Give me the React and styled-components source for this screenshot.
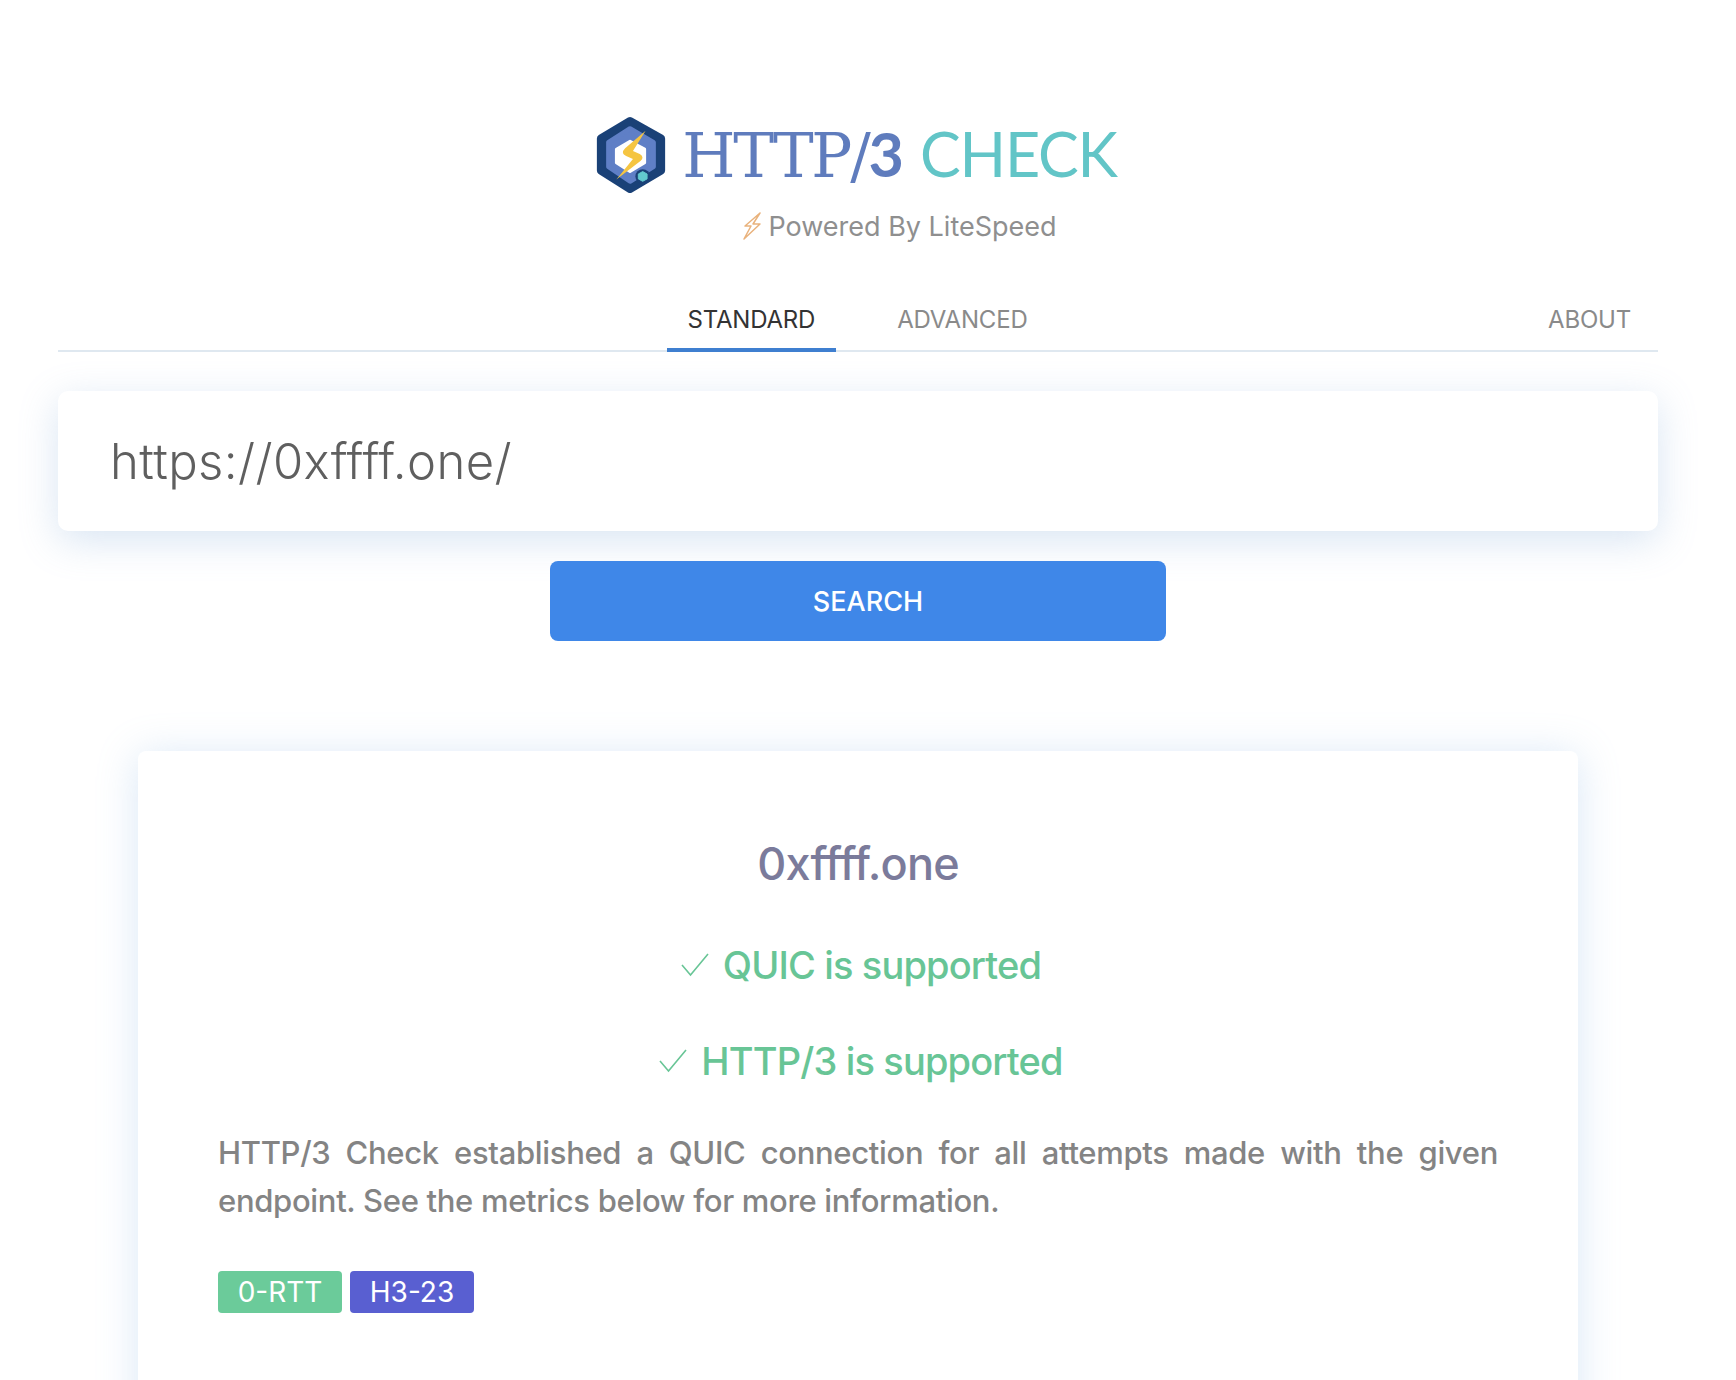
import * as React from 'react';
import styled, { createGlobalStyle } from 'styled-components';

const GlobalStyle = createGlobalStyle`
    html, body {
        margin: 0;
        padding: 0;
        background: #fff;
        font-family: Inter, "Liberation Sans", sans-serif;
    }
`;

const Page = styled.div`
    height: 1380px;
    overflow: hidden;
    padding: 116px 78px 0 58px;
    box-sizing: border-box;
`;

const Brand = styled.div`
    display: flex;
    align-items: center;
    justify-content: center;
    gap: 15px;
    height: 78px;
    padding-right: 4px;
`;

const BrandSlab = styled.span`
    font-family: "DejaVu Serif", serif;
    font-size: 61px;
    line-height: 78px;
    letter-spacing: -2.2px;
    color: #5f7cbd;
`;

const BrandDigit = styled.span`
    font-family: Lato, sans-serif;
    font-weight: 700;
    letter-spacing: 0;
`;

const BrandCheck = styled.span`
    font-family: Lato, sans-serif;
    font-size: 61px;
    line-height: 78px;
    letter-spacing: -1.2px;
    color: #62c5c7;
`;

const BrandWords = styled.div`
    display: flex;
    gap: 16px;
`;

const Powered = styled.div`
    display: flex;
    align-items: center;
    justify-content: center;
    gap: 5px;
    height: 34px;
    margin-top: 15px;
    padding-left: 82px;
    font-size: 27px;
    letter-spacing: 0;
    color: #8f8f8f;
`;

const TabBar = styled.div`
    display: grid;
    grid-template-columns: 1fr auto 1fr;
    height: 66px;
    margin-top: 41px;
    border-bottom: 2px solid #dfe8f0;
`;

const TabGroup = styled.div`
    grid-column: 2;
    display: flex;
    gap: 41px;
`;

const Tab = styled.div`
    display: flex;
    align-items: center;
    justify-content: center;
    justify-self: ${(props) => props.$end ? 'end' : 'auto'};
    height: 68px;
    padding: 6px ${(props) => props.$end ? '27px' : '21px'} 0 ${(props) => props.$end ? '0' : '20px'};
    box-sizing: border-box;
    font-size: 24px;
    letter-spacing: -0.2px;
    color: ${(props) => props.$active ? '#333' : '#8a8a8a'};
    border-bottom: 4px solid ${(props) => props.$active ? '#3f7fd0' : 'transparent'};
`;

const InputCard = styled.div`
    display: flex;
    align-items: center;
    height: 140px;
    margin-top: 39px;
    padding-left: 52px;
    background: #fff;
    border-radius: 10px;
    box-shadow: 0 10px 38px rgba(130, 170, 215, 0.3);
    font-family: Inter, sans-serif;
    font-weight: 300;
    font-size: 49px;
    letter-spacing: 0.4px;
    color: #5f5f5f;
`;

const SearchRow = styled.div`
    display: flex;
    justify-content: center;
    margin-top: 30px;
`;

const SearchButton = styled.button`
    width: 616px;
    height: 80px;
    padding: 0 0 0 20px;
    border: 0;
    border-radius: 8px;
    background: #3f87e8;
    color: #fff;
    font-family: Inter, sans-serif;
    font-size: 27px;
    font-weight: 450;
    letter-spacing: 0;
`;

const ResultCard = styled.section`
    margin: 110px 80px 0;
    padding: 80px 80px 60px;
    height: 800px;
    box-sizing: border-box;
    background: #fff;
    border-radius: 8px;
    box-shadow: 0 4px 40px rgba(130, 175, 225, 0.3);
`;

const Host = styled.h2`
    margin: 0;
    text-align: center;
    font-size: 45px;
    line-height: 66px;
    font-weight: 450;
    letter-spacing: -0.8px;
    color: #7b7b9b;
`;

const Status = styled.div`
    display: flex;
    align-items: center;
    justify-content: center;
    gap: 14px;
    height: 60px;
    margin-top: ${(props) => props.$first ? '38px' : '36px'};
    padding-left: 6px;
    font-size: 38px;
    font-weight: 450;
    letter-spacing: -0.85px;
    color: #68c596;
`;

const Description = styled.p`
    margin: 38px 0 0;
    text-align: justify;
    font-size: 31px;
    font-weight: 450;
    line-height: 48px;
    letter-spacing: -0.32px;
    color: #848484;
`;

const Badges = styled.div`
    display: flex;
    gap: 8px;
    margin-top: 46px;
`;

const Badge = styled.span`
    display: flex;
    align-items: center;
    justify-content: center;
    width: 124px;
    height: 42px;
    border-radius: 4px;
    background: ${(props) => props.$color};
    color: #fff;
    font-size: 28px;
`;

const BrandLogo = () => (
    <svg width="72" height="78" viewBox="6 5 72 80" aria-hidden="true">
        <path d="M41 10 L73 28 V61 L41 80 L11 61 V28 Z" fill="#1a4177" stroke="#1a4177" strokeWidth="8" strokeLinejoin="round" />
        <path d="M41 18 L65 32 V57 L41 72 L19 57 V32 Z" fill="#5f7fc6" stroke="#5f7fc6" strokeWidth="5" strokeLinejoin="round" />
        <path d="M41 31 L56 39 V53 L41 62 L27 53 V39 Z" fill="#fff" stroke="#fff" strokeWidth="3" strokeLinejoin="round" />
        <path d="M57 20 L36 38 Q31 43 37 46 L44 49 L27 70 L52 51 Q56 47 51 44 L44 41 Z" fill="#f5c542" />
        <circle cx="54" cy="67" r="7.5" fill="#1a4177" />
        <path d="M54 62 L58.5 64.5 V69.5 L54 72 L49.5 69.5 V64.5 Z" fill="#62c9cf" stroke="#62c9cf" strokeLinejoin="round" />
    </svg>
);

const BoltIcon = () => (
    <svg width="22" height="28" viewBox="0 0 22 28" fill="none" stroke="#e9b27c" strokeWidth="1.5" strokeLinejoin="round" aria-hidden="true">
        <path d="M19 1 L4 14 H10 L3 27 L19 12 H12 Z" />
    </svg>
);

const CheckIcon = () => (
    <svg width="28" height="24" viewBox="0 0 28 24" fill="none" stroke="#68c596" strokeWidth="1.6" aria-hidden="true">
        <path d="M1 12 L9.5 22 L27 1" />
    </svg>
);

const App = () => (
    <Page>
        <GlobalStyle />
        <Brand>
            <BrandLogo />
            <BrandWords>
                <BrandSlab>HTTP/<BrandDigit>3</BrandDigit></BrandSlab>
                <BrandCheck>CHECK</BrandCheck>
            </BrandWords>
        </Brand>
        <Powered>
            <BoltIcon />
            <span>Powered By LiteSpeed</span>
        </Powered>
        <TabBar>
            <TabGroup>
                <Tab $active>STANDARD</Tab>
                <Tab>ADVANCED</Tab>
            </TabGroup>
            <Tab $end>ABOUT</Tab>
        </TabBar>
        <InputCard>https://0xffff.one/</InputCard>
        <SearchRow>
            <SearchButton>SEARCH</SearchButton>
        </SearchRow>
        <ResultCard>
            <Host>0xffff.one</Host>
            <Status $first>
                <CheckIcon />
                <span>QUIC is supported</span>
            </Status>
            <Status>
                <CheckIcon />
                <span>HTTP/3 is supported</span>
            </Status>
            <Description>
                HTTP/3 Check established a QUIC connection for all attempts made with the given endpoint. See the metrics below for more information.
            </Description>
            <Badges>
                <Badge $color="#6bcb9a">0-RTT</Badge>
                <Badge $color="#595fd1">H3-23</Badge>
            </Badges>
        </ResultCard>
    </Page>
);

export default App;
